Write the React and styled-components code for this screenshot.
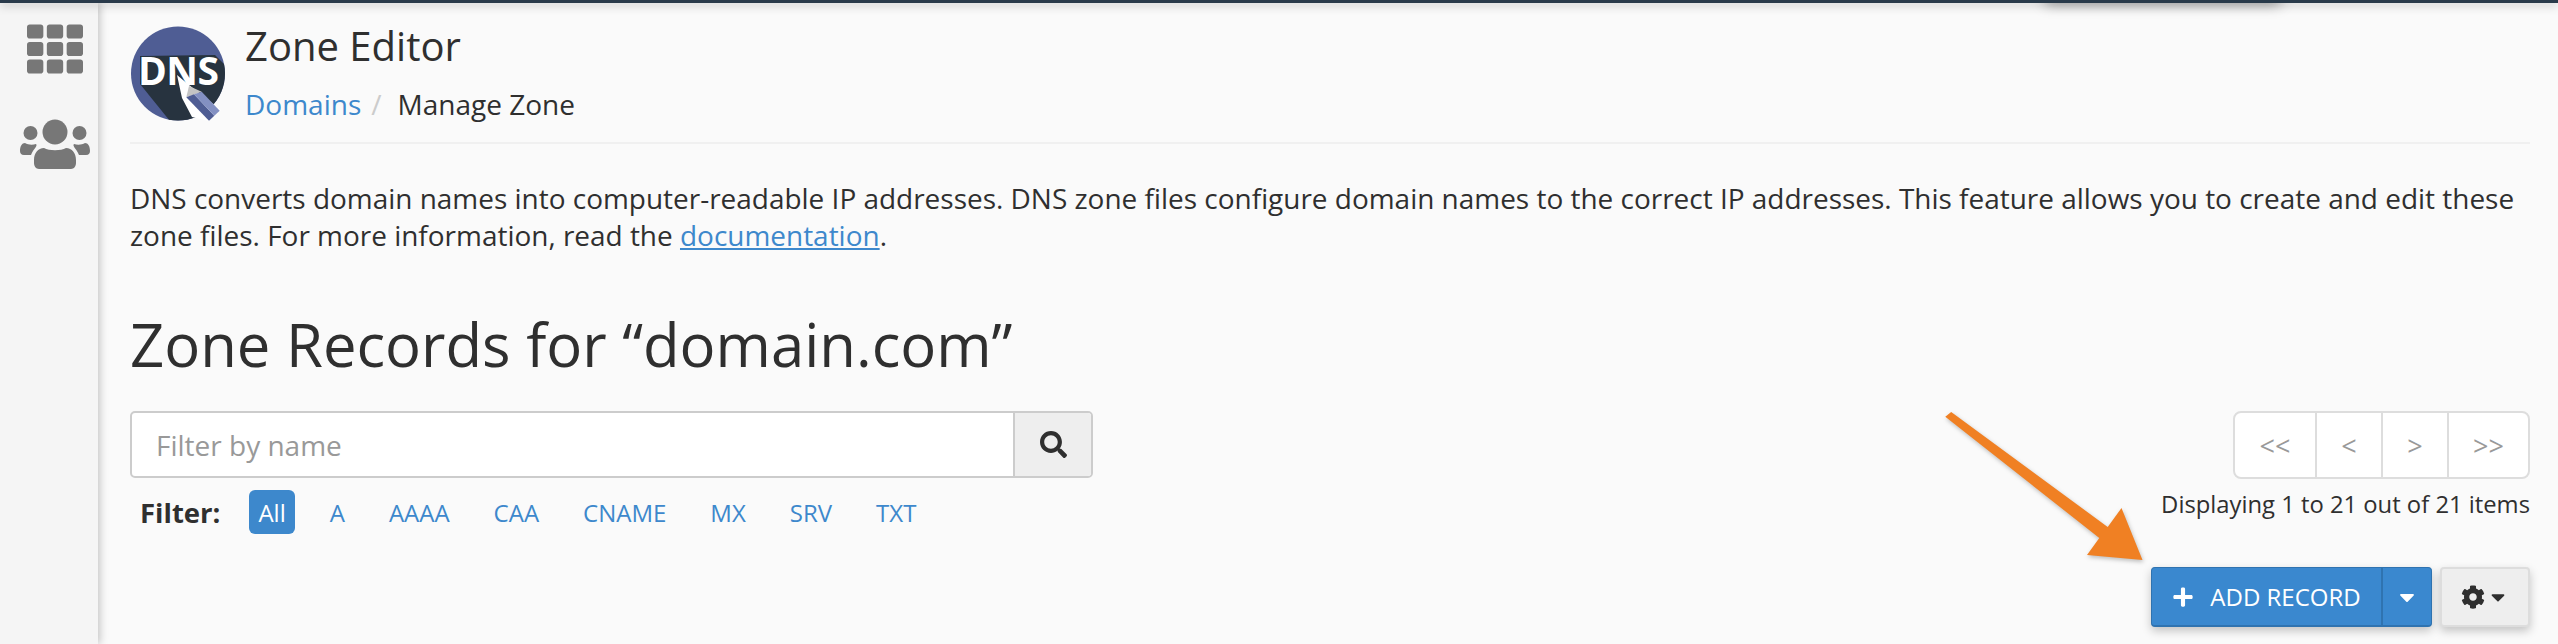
import React from 'react';
import styled, { createGlobalStyle } from 'styled-components';
import { FaTh, FaSearch, FaCog, FaPlus, FaCaretDown } from 'react-icons/fa';

const GlobalStyle = createGlobalStyle`
    html, body {
        margin: 0;
        height: 644px;
        overflow: hidden;
        background: #fafafa;
        font-family: "Open Sans", "Noto Sans", sans-serif;
        color: #2f2f2f;
    }
`;

const Page = styled.div`
    position: relative;
    width: 2558px;
    height: 644px;
    display: flex;
    flex-direction: column;
    overflow: hidden;
`;

const TopBar = styled.div`
    height: 3px;
    flex: none;
    background: #293a4a;
    box-shadow: 0 2px 10px rgba(0, 0, 0, 0.35);
    position: relative;
    z-index: 3;
`;

const TopShadow = styled.div`
    position: absolute;
    top: -14px;
    left: 2045px;
    width: 235px;
    height: 14px;
    background: #555;
    box-shadow: 0 4px 14px rgba(0, 0, 0, 0.4);
    z-index: 2;
`;

const Body = styled.div`
    flex: 1;
    display: flex;
    min-height: 0;
`;

const Sidebar = styled.nav`
    width: 98px;
    box-sizing: border-box;
    flex: none;
    background: #f5f5f5;
    box-shadow: 2px 0 8px rgba(0, 0, 0, 0.22);
    display: flex;
    flex-direction: column;
    align-items: center;
    padding: 18px 0 0 12px;
    gap: 42px;
    color: #777;
    position: relative;
    z-index: 1;
`;

const Main = styled.main`
    flex: 1;
    min-width: 0;
    padding: 23px 28px 0 32px;
    display: flex;
    flex-direction: column;
`;

const Header = styled.header`
    display: flex;
    gap: 19px;
    padding-bottom: 19px;
    border-bottom: 2px solid #f0f0f0;
`;

const TitleBlock = styled.div`
    display: flex;
    flex-direction: column;
`;

const Title = styled.h1`
    margin: 0;
    font-size: 40px;
    line-height: 40px;
    font-weight: 400;
`;

const Breadcrumb = styled.div`
    margin-top: 19px;
    font-size: 28px;
    line-height: 38px;
    display: flex;
`;

const Link = styled.a`
    color: #3d88cc;
    text-decoration: ${(props) => (props.$underline ? 'underline' : 'none')};
`;

const Separator = styled.span`
    color: #ccc;
    padding: 0 16px 0 10px;
`;

const Description = styled.p`
    margin: 36px 0 0;
    font-size: 27.96px;
    line-height: 37px;
`;

const Heading = styled.h2`
    margin: 48px 0 0;
    font-size: 59.8px;
    line-height: 84px;
    font-weight: 400;
`;

const Toolbar = styled.div`
    margin-top: 25px;
    display: flex;
    justify-content: space-between;
    align-items: flex-start;
`;

const SearchColumn = styled.div`
    width: 963px;
`;

const SearchBox = styled.div`
    height: 67px;
    box-sizing: border-box;
    display: flex;
    border: 2px solid #ccc;
    border-radius: 5px;
    background: #fff;
    overflow: hidden;
`;

const SearchInput = styled.input`
    flex: 1;
    min-width: 0;
    border: 0;
    outline: 0;
    padding: 0 24px;
    font: 400 28px "Open Sans", sans-serif;
    background: transparent;

    &::placeholder {
        color: #999;
        opacity: 1;
    }
`;

const SearchButton = styled.div`
    width: 76px;
    display: flex;
    align-items: center;
    justify-content: center;
    background: #eee;
    border-left: 2px solid #ccc;
    color: #2f2f2f;
`;

const FilterRow = styled.div`
    margin-top: 13px;
    display: flex;
    align-items: center;
    padding: 0 0 2px 10px;
    height: 44px;
    box-sizing: border-box;
    font-size: 24px;
`;

const FilterLabel = styled.strong`
    font-weight: 700;
    margin-right: 29px;
    font-size: 27.5px;
`;

const FilterItem = styled.span`
    height: 44px;
    display: flex;
    align-items: center;
    padding: 0 9px;
    margin-right: 26px;
    border-radius: 6px;
    color: ${(props) => (props.$active ? '#fff' : '#3d88cc')};
    background: ${(props) => (props.$active ? '#3d88cc' : 'transparent')};
`;

const PagerColumn = styled.div`
    display: flex;
    flex-direction: column;
    align-items: flex-end;
`;

const Pager = styled.div`
    display: flex;
    height: 68px;
    box-sizing: border-box;
    border: 2px solid #ddd;
    border-radius: 8px;
    background: #fff;
`;

const PagerCell = styled.div`
    width: ${(props) => props.$width}px;
    box-sizing: border-box;
    display: flex;
    align-items: center;
    justify-content: center;
    font-size: 27px;
    color: #999;

    & + & {
        border-left: 2px solid #ddd;
    }
`;

const PageInfo = styled.div`
    margin-top: 7px;
    font-size: 23.8px;
    line-height: 36px;
`;

const ActionRow = styled.div`
    margin-top: 32px;
    display: flex;
    justify-content: flex-end;
    gap: 8px;
`;

const AddButton = styled.div`
    height: 60px;
    box-sizing: border-box;
    display: flex;
    background: #3a88cf;
    border: 1px solid #2f73b0;
    border-bottom-width: 2px;
    border-radius: 4px;
    color: #fff;
    box-shadow: 0 4px 10px rgba(0, 0, 0, 0.22);
`;

const AddLabel = styled.div`
    width: 229px;
    display: flex;
    align-items: center;
    justify-content: center;
    gap: 16px;
    font-size: 24px;
`;

const AddCaret = styled.div`
    width: 50px;
    box-sizing: border-box;
    display: flex;
    align-items: center;
    justify-content: center;
    border-left: 2px solid #2f73b0;
`;

const GearButton = styled.div`
    width: 90px;
    height: 60px;
    box-sizing: border-box;
    display: flex;
    align-items: center;
    justify-content: center;
    gap: 2px;
    background: #eee;
    border: 2px solid #ddd;
    border-radius: 4px;
    color: #2f2f2f;
    box-shadow: 0 4px 10px rgba(0, 0, 0, 0.22);
`;

const ArrowLayer = styled.svg`
    position: absolute;
    left: 1930px;
    top: 400px;
    filter: drop-shadow(1px 2px 2px rgba(0, 0, 0, 0.25));
    z-index: 2;
`;

const filters = ['A', 'AAAA', 'CAA', 'CNAME', 'MX', 'SRV', 'TXT'];

function UsersIcon() {
    return (
        <svg width="70" height="50" viewBox="0 0 70 50" fill="currentColor">
            <circle cx="35" cy="13" r="12.5" />
            <circle cx="10.5" cy="14" r="7" />
            <circle cx="59.5" cy="14" r="7" />
            <path d="M24 29 C29 32 41 32 46 29 C52 29 56 34 56 41 V44 C56 47 54 50 51 50 H19 C16 50 14 47 14 44 V41 C14 34 18 29 24 29 Z" />
            <path d="M5 24 C8 26 13 26 16 25 C18 27 14 29 11 36 H4 C1 36 0 34 0 32 C0 27 2 24 5 24 Z" />
            <path d="M65 24 C62 26 57 26 54 25 C52 27 56 29 59 36 H66 C69 36 70 34 70 32 C70 27 68 24 65 24 Z" />
        </svg>
    );
}

function DnsLogo() {
    return (
        <svg width="96" height="95" viewBox="-1 0 96 95" style={{ flex: 'none' }}>
            <defs>
                <clipPath id="dns-circle">
                    <circle cx="47" cy="47.5" r="47" />
                </clipPath>
            </defs>
            <circle cx="47" cy="47.5" r="47" fill="#4f5d94" />
            <g clipPath="url(#dns-circle)">
                <path d="M9 58 L9 30 L84 29 L100 45 L100 100 L43 100 Z" fill="#27333f" />
            </g>
            <text x="7" y="59" fontFamily="'Open Sans', sans-serif" fontSize="39" fontWeight="700" fill="#fff" letterSpacing="-0.5">DNS</text>
            <path d="M46 49 L58 59 L90 84 L78 95 L61 91 L51 72 Z" fill="#fff" />
            <path d="M55.3 71.3 L58 60 L70.7 65.7 Z" fill="#c4c4c4" />
            <path d="M55.3 71.3 L63 68.3 L83.3 89.7 L78 94.7 Z" fill="#4f5d94" />
            <path d="M63 68.3 L70.7 65.7 L88.7 84.7 L83.3 89.7 Z" fill="#8390c2" />
        </svg>
    );
}

function App() {
    return (
        <Page>
            <GlobalStyle />
            <TopBar />
            <TopShadow />
            <Body>
                <Sidebar>
                    <FaTh size={56} />
                    <UsersIcon />
                </Sidebar>
                <Main>
                    <Header>
                        <DnsLogo />
                        <TitleBlock>
                            <Title>Zone Editor</Title>
                            <Breadcrumb>
                                <Link>Domains</Link>
                                <Separator>/</Separator>
                                <span>Manage Zone</span>
                            </Breadcrumb>
                        </TitleBlock>
                    </Header>
                    <Description>
                        DNS converts domain names into computer-readable IP addresses. DNS zone files configure domain names to the correct IP addresses. This feature allows you to create and edit these zone files. For more information, read the <Link $underline>documentation</Link>.
                    </Description>
                    <Heading>Zone Records for “domain.com”</Heading>
                    <Toolbar>
                        <SearchColumn>
                            <SearchBox>
                                <SearchInput placeholder="Filter by name" />
                                <SearchButton>
                                    <FaSearch size={27} />
                                </SearchButton>
                            </SearchBox>
                            <FilterRow>
                                <FilterLabel>Filter:</FilterLabel>
                                <FilterItem $active>All</FilterItem>
                                {filters.map((item) => (
                                    <FilterItem key={item}>{item}</FilterItem>
                                ))}
                            </FilterRow>
                        </SearchColumn>
                        <PagerColumn>
                            <Pager>
                                <PagerCell $width={80}>&lt;&lt;</PagerCell>
                                <PagerCell $width={66}>&lt;</PagerCell>
                                <PagerCell $width={66}>&gt;</PagerCell>
                                <PagerCell $width={81}>&gt;&gt;</PagerCell>
                            </Pager>
                            <PageInfo>Displaying 1 to 21 out of 21 items</PageInfo>
                        </PagerColumn>
                    </Toolbar>
                    <ActionRow>
                        <AddButton>
                            <AddLabel>
                                <FaPlus size={22} />
                                ADD RECORD
                            </AddLabel>
                            <AddCaret>
                                <FaCaretDown size={24} />
                            </AddCaret>
                        </AddButton>
                        <GearButton>
                            <FaCog size={24} />
                            <FaCaretDown size={22} />
                        </GearButton>
                    </ActionRow>
                </Main>
            </Body>
            <ArrowLayer width="220" height="170" viewBox="0 0 220 170">
                <path d="M15.3 16.7 L21.2 12 L177.7 127 L191.5 108 L212.5 160 L157 155 L169.3 138 Z" fill="#f08023" />
            </ArrowLayer>
        </Page>
    );
}

export default App;
